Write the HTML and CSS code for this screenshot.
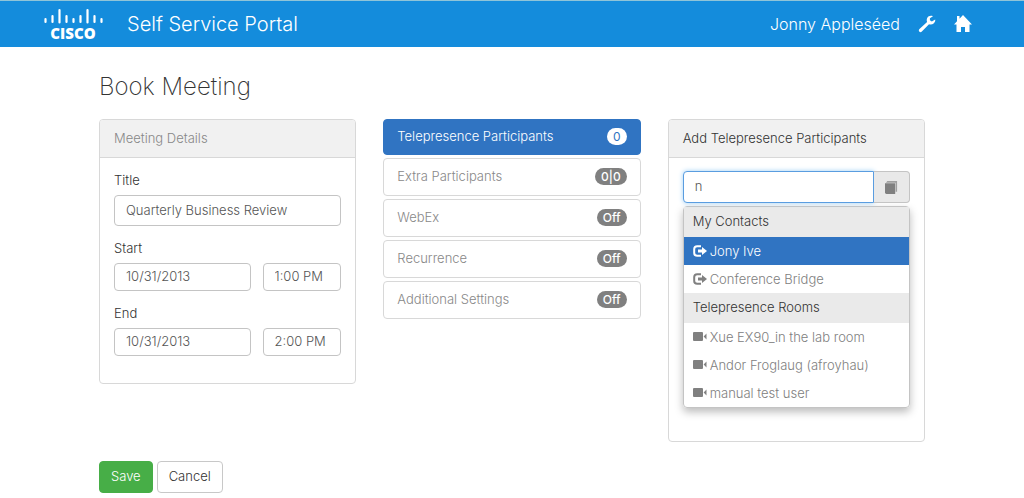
FILE: index.html
```html
<!DOCTYPE html>
<html lang="en">
<head>
<meta charset="utf-8">
<meta name="viewport" content="width=device-width, initial-scale=1">
<title>Book Meeting - Self Service Portal</title>
<link rel="stylesheet" href="styles.css">
</head>
<body>
<svg class="sprite" aria-hidden="true">
  <symbol id="icon-exit" viewBox="0 0 14 12">
    <path d="M8 1.2H4.2Q1.2 1.2 1.2 4v4q0 2.8 3 2.8H8" fill="none" stroke="currentColor" stroke-width="2"/>
    <path d="M5 4.5h4V2l5 4-5 4V7.500H5z" fill="currentColor"/>
  </symbol>
  <symbol id="icon-video" viewBox="0 0 14 12">
    <path d="M1 1h8q1 0 1 1v7q0 1-1 1H1q-1 0-1-1V2q0-1 1-1zM10.600 5.500 13.500 2.500v6z" fill="currentColor"/>
  </symbol>
</svg>
<header class="navbar">
  <div class="navbar-inner">
    <a class="logo" href="#" aria-label="Cisco home">
      <svg class="logo-bars" viewBox="0 0 60 18" aria-hidden="true">
        <path d="M2.500 12v3M9.500 9v6M16.500 3v12.500M23.500 9v6M30.500 12v3M37.500 9v6M44.500 3v12.500M51.500 9v6M58.500 12v3" fill="none" stroke="currentColor" stroke-width="2.200" stroke-linecap="round"/>
      </svg>
      <span class="logo-name">CISCO</span>
    </a>
    <span class="brand">Self Service Portal</span>
    <nav class="user-nav">
      <a href="#">Jonny Appleséed</a>
      <a href="#" aria-label="Settings">
        <svg class="nav-icon" viewBox="0 0 18 18"><path d="M17.200 4.600 13.800 6.500 11.900 5.300V3.200L15 1.200C12.700.2 10.300.900 9.200 3 8.500 4.500 8.700 5.900 9.100 7L1.200 14.300Q.3 15.300 1.200 16.500 2.400 17.800 3.600 16.800L11 9.200C12.600 9.800 14.500 9.500 15.900 8.300 17 7.200 17.400 6 17.200 4.600z" fill="currentColor"/></svg>
      </a>
      <a href="#" aria-label="Home">
        <svg class="nav-icon" viewBox="0 0 18 18"><path d="M9 0 18 9.500h-2.500V17H11v-5H7v5H2.500V9.500H0L3 6.300V1h2.500v2.700z" fill="currentColor"/></svg>
      </a>
    </nav>
  </div>
</header>
<main class="container">
  <h1>Book Meeting</h1>
  <div class="columns">
    <section class="panel">
      <h2 class="panel-heading muted">Meeting Details</h2>
      <form class="panel-body details">
        <label for="title">Title</label>
        <input class="control title-input" id="title" type="text" value="Quarterly Business Review">
        <label for="start-date">Start</label>
        <div class="date-row">
          <input class="control" id="start-date" type="text" value="10/31/2013">
          <input class="control" type="text" value="1:00 PM" aria-label="Start time">
        </div>
        <label for="end-date">End</label>
        <div class="date-row">
          <input class="control" id="end-date" type="text" value="10/31/2013">
          <input class="control" type="text" value="2:00 PM" aria-label="End time">
        </div>
      </form>
    </section>
    <nav class="pills">
      <button class="pill active" type="button">Telepresence Participants <span class="badge">0</span></button>
      <button class="pill" type="button">Extra Participants <span class="badge">0|0</span></button>
      <button class="pill" type="button">WebEx <span class="badge">Off</span></button>
      <button class="pill" type="button">Recurrence <span class="badge">Off</span></button>
      <button class="pill" type="button">Additional Settings <span class="badge">Off</span></button>
    </nav>
    <section class="panel">
      <h2 class="panel-heading">Add Telepresence Participants</h2>
      <div class="panel-body search">
        <div class="input-group">
          <input class="control search-input" type="text" value="n" aria-label="Search participants">
          <button class="addon" type="button" aria-label="Open phone book">
            <svg class="book-icon" viewBox="0 0 14 14"><path d="M2.500 0H13v11.500h-1.500V2H1z" fill="currentColor" opacity=".7"/><path d="M0 2.500h11V14H1.500Q0 14 0 12.500z" fill="currentColor"/></svg>
          </button>
        </div>
        <ul class="menu">
          <li class="menu-header">My Contacts</li>
          <li><a class="menu-item selected" href="#"><svg class="item-icon"><use href="#icon-exit"/></svg>Jony Ive</a></li>
          <li><a class="menu-item" href="#"><svg class="item-icon"><use href="#icon-exit"/></svg>Conference Bridge</a></li>
          <li class="menu-header">Telepresence Rooms</li>
          <li><a class="menu-item" href="#"><svg class="item-icon"><use href="#icon-video"/></svg>Xue EX90_in the lab room</a></li>
          <li><a class="menu-item" href="#"><svg class="item-icon"><use href="#icon-video"/></svg>Andor Froglaug (afroyhau)</a></li>
          <li><a class="menu-item" href="#"><svg class="item-icon"><use href="#icon-video"/></svg>manual test user</a></li>
        </ul>
      </div>
    </section>
  </div>
  <div class="actions">
    <button class="btn btn-save" type="button">Save</button>
    <button class="btn" type="button">Cancel</button>
  </div>
</main>
</body>
</html>
```
FILE: styles.css
```css
* {
  box-sizing: border-box;
}

body {
  margin: 0;
  background: #fff;
  color: #333;
  font: 300 13px/20px Inter, "Liberation Sans", sans-serif;
}

button,
input {
  font: inherit;
  color: inherit;
}

a {
  color: inherit;
  text-decoration: none;
}

svg {
  display: block;
}

.sprite {
  display: none;
}

.navbar {
  background: #148cdc;
  border-top: 1px solid #8fc4d8;
  color: #fff;
}

.navbar-inner {
  display: flex;
  align-items: center;
  height: 46px;
  padding: 0 52px 0 43px;
}

.logo {
  width: 60px;
  text-align: center;
}

.logo-bars {
  width: 60px;
  height: 18px;
}

.logo-name {
  display: block;
  font-family: "Open Sans", sans-serif;
  font-size: 15px;
  font-weight: 800;
  line-height: 16px;
}

.brand {
  margin-left: 24px;
  font-size: 20px;
}

.user-nav {
  display: flex;
  align-items: center;
  gap: 18px;
  margin-left: auto;
  font-size: 16px;
}

.nav-icon {
  width: 18px;
  height: 18px;
}

.container {
  max-width: 826px;
  margin: 0 auto;
  padding-top: 24px;
}

h1 {
  margin: 0 0 16px;
  font-size: 24px;
  font-weight: 200;
  line-height: 32px;
}

.columns {
  display: grid;
  grid-template-columns: repeat(3, 1fr);
  align-items: start;
  gap: 27px;
}

.panel {
  border: 1px solid #d8d8d8;
  border-radius: 4px;
}

.panel-heading {
  margin: 0;
  padding: 8px 14px;
  background: #f1f1f1;
  border-bottom: 1px solid #d8d8d8;
  border-radius: 3px 3px 0 0;
  font-size: 13px;
  font-weight: 300;
  line-height: 21px;
}

.muted {
  color: #888;
}

.panel-body {
  padding: 13px 14px;
}

.details {
  padding: 12px 14px 27px;
}

.details label {
  display: block;
  margin-bottom: 5px;
}

.control {
  display: block;
  width: 100%;
  min-width: 0;
  height: 28px;
  padding: 0 11px 2px;
  background: #fff;
  border: 1px solid #c4c4c4;
  border-radius: 4px;
  color: #555;
}

.title-input {
  height: 31px;
  margin-bottom: 12px;
}

.date-row {
  display: grid;
  grid-template-columns: 137fr 79fr;
  gap: 12px;
}

.date-row + label {
  margin-top: 12px;
}

.pills {
  display: grid;
  gap: 3px;
}

.pill {
  display: flex;
  align-items: center;
  justify-content: space-between;
  height: 38px;
  padding: 0 13px 2px;
  background: #fff;
  border: 1px solid #d8d8d8;
  border-radius: 4px;
  color: #888;
}

.badge {
  padding: 0 6px;
  background: #808080;
  border-radius: 9px;
  color: #fff;
  font-size: 12px;
  font-weight: 500;
  line-height: 17px;
}

.pill.active {
  height: 36px;
  background: #3074c2;
  border-color: #3074c2;
  color: #fff;
}

.active .badge {
  background: #fff;
  color: #3074c2;
  font-weight: 400;
}

.search {
  padding-bottom: 33px;
}

.input-group {
  display: flex;
  margin-bottom: 3px;
}

.search-input {
  flex: 1;
  height: 32px;
  border-color: #5a9de0;
  border-radius: 4px 0 0 4px;
  box-shadow: 0 0 5px #9fd0f5;
}

.addon {
  display: grid;
  place-items: center;
  width: 36px;
  padding: 0;
  background: #e9e9e9;
  border: 1px solid #c4c4c4;
  border-left: 0;
  border-radius: 0 4px 4px 0;
  color: #808080;
}

.book-icon {
  width: 13px;
  height: 13px;
}

.menu {
  margin: 0;
  padding: 0;
  list-style: none;
  border: 1px solid #c4c4c4;
  border-radius: 4px;
  box-shadow: 0 4px 8px #0004;
}

.menu-header {
  padding: 3px 9px 5px;
  background: #eaeaea;
  line-height: 22px;
}

.menu-item {
  display: flex;
  align-items: center;
  gap: 3px;
  padding: 4px 9px;
  color: #808080;
}

.menu-item.selected {
  background: #3074c2;
  color: #fff;
}

.item-icon {
  width: 14px;
  height: 12px;
}

.actions {
  display: flex;
  gap: 4px;
  padding: 19px 0 6px;
}

.btn {
  height: 32px;
  padding: 0 11px 2px;
  background: #fff;
  border: 1px solid #c8c8c8;
  border-radius: 4px;
}

.btn-save {
  background: #47ae47;
  border-color: #47ae47;
  color: #fff;
}
```
